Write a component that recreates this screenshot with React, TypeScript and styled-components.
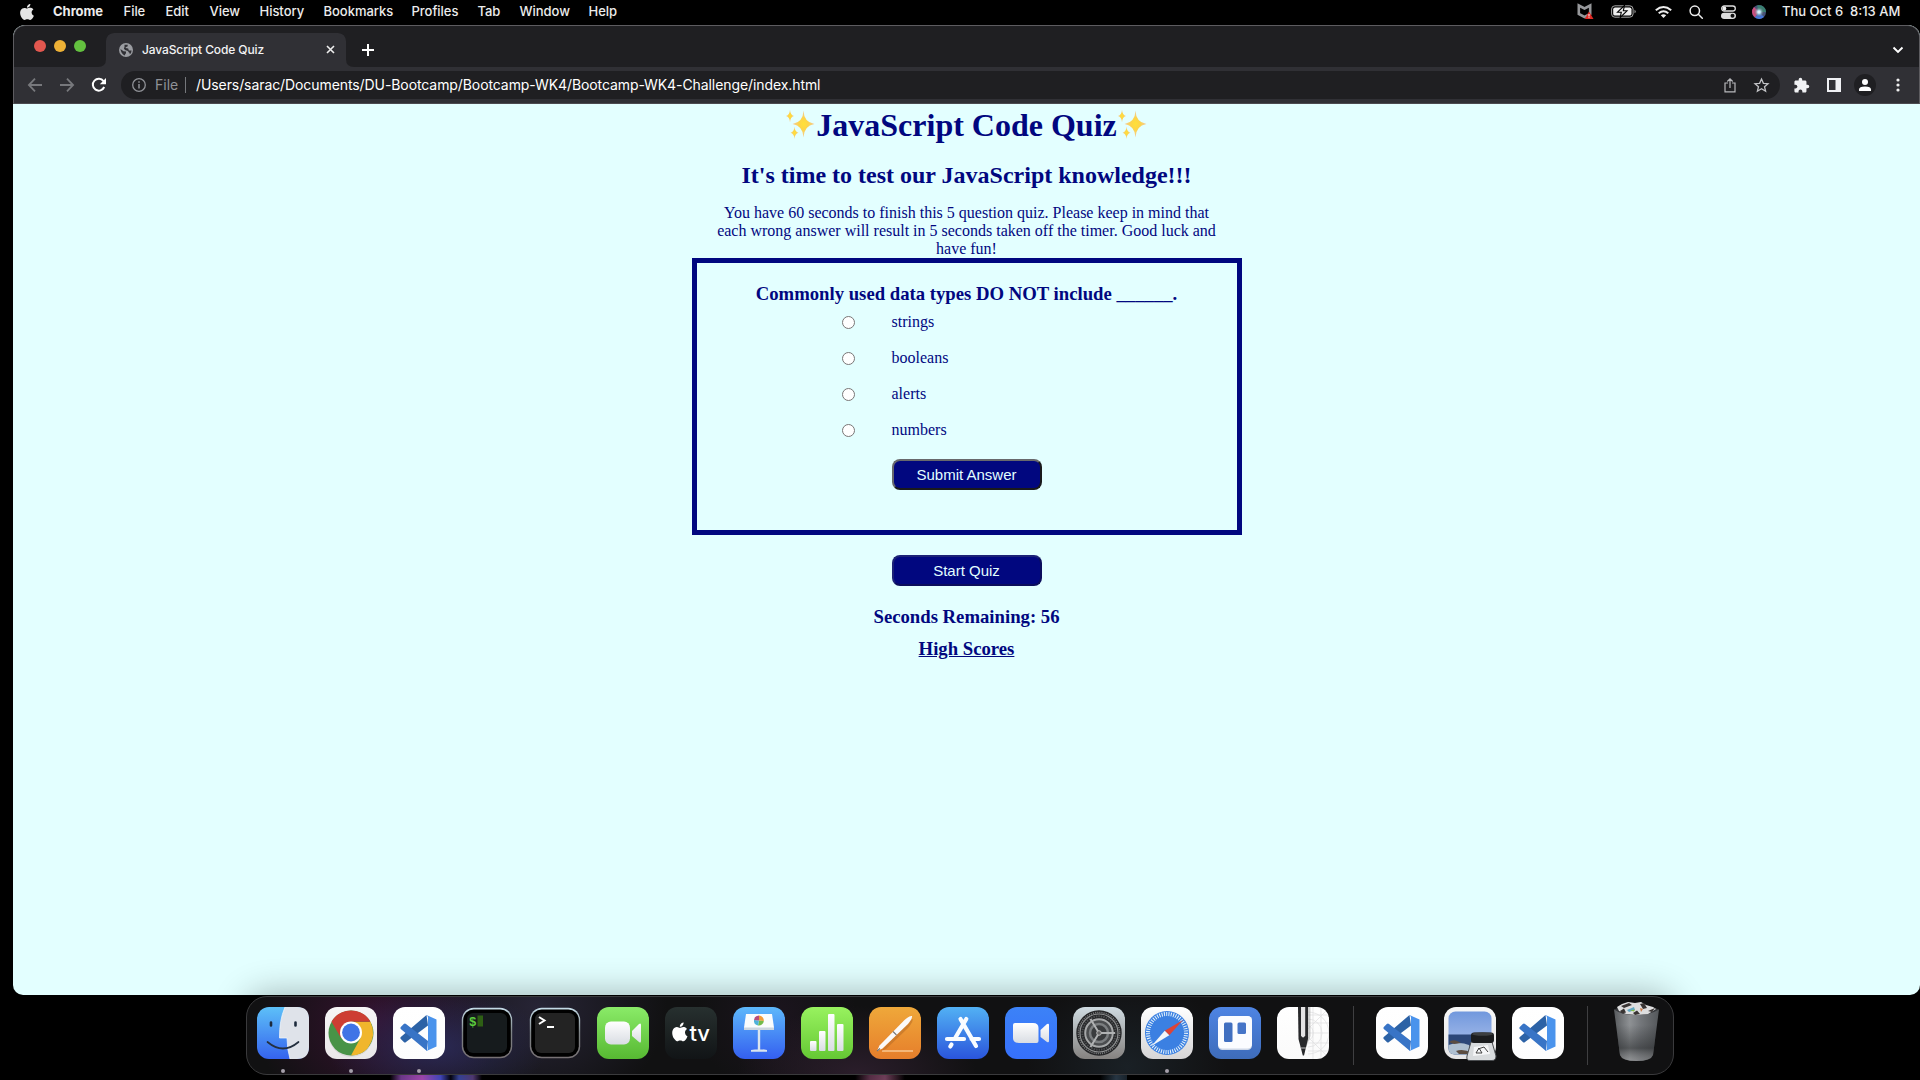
import React from 'react';
import styled, { createGlobalStyle } from 'styled-components';

const NAVY = '#01077f';
const SERIF = '"Liberation Serif", "Times New Roman", serif';
const UI = 'Inter, "Liberation Sans", sans-serif';

const Global = createGlobalStyle`
  * { box-sizing: border-box; }
  html, body { margin: 0; background: #000; }
  svg { display: block; flex: none; overflow: visible; }
`;

const Desktop = styled.div`
  width: 1920px;
  height: 1080px;
  overflow: hidden;
  display: flex;
  flex-direction: column;
  font-family: ${UI};
  background:
    linear-gradient(90deg, transparent, #7a3f9a 12%, #b04fc0 35%, #4a4fd0 55%, #050510 66%, #3c4aa8 75%, #5a4080 90%, transparent) 390px 1075px / 92px 5px no-repeat,
    linear-gradient(90deg, transparent, #62344f 30%, #7d4664 60%, transparent) 855px 1075px / 50px 5px no-repeat,
    linear-gradient(90deg, transparent, #2c3d4c 60%, #1c2730) 1100px 1075px / 27px 5px no-repeat,
    #000;
`;

/* Menu bar */
const MenuBar = styled.header`
  height: 25px;
  display: flex;
  align-items: center;
  padding: 0 19px 3px 20px;
  color: #ececec;
  font-size: 13px;
  line-height: 22px;
`;
const MenuItem = styled.span<{ $w: number; $bold?: boolean; $ls?: number }>`
  width: ${p => p.$w}px;
  flex: none;
  white-space: pre;
  font-weight: ${p => (p.$bold ? 700 : 500)};
  letter-spacing: ${p => p.$ls ?? -0.03}px;
`;
const MenuIcon = styled.span<{ $w: number }>`
  width: ${p => p.$w}px;
  flex: none;
  display: flex;
  padding-top: 1px;
`;
const Spacer = styled.div`
  flex: 1;
`;

/* Browser window */
const Win = styled.section`
  margin-left: 13px;
  height: 970px;
  border-radius: 12px 12px 10px 10px;
  overflow: hidden;
  display: flex;
  flex-direction: column;
  background: #e3ffff;
`;
const Chrome = styled.div`
  height: 79px;
  border: 1px solid #5d5c60;
  border-bottom-color: #4b4a4f;
  border-radius: 12px 12px 0 0;
  background: #1f1f22;
  overflow: hidden;
`;
const TabStrip = styled.div`
  height: 41px;
  display: flex;
  align-items: flex-end;
  padding: 0 15px 0 20px;
`;
const Lights = styled.div`
  display: flex;
  gap: 8px;
  width: 72px;
  height: 34px;
  padding-top: 7px;
`;
const Light = styled.i<{ $c: string }>`
  width: 12px;
  height: 12px;
  border-radius: 50%;
  background: ${p => p.$c};
`;
const Tab = styled.div`
  width: 240px;
  height: 34px;
  border-radius: 8px 8px 0 0;
  background: #303035;
  display: flex;
  align-items: center;
  padding: 0 11px 1px 13px;
  color: #f3f3f4;
  font-size: 12px;
  box-shadow: 8px 8px 0 0 #303035, -8px 8px 0 0 #303035;
  clip-path: path('M-8 34 Q0 34 0 26 V8 Q0 0 8 0 H232 Q240 0 240 8 V26 Q240 34 248 34 Z');
`;
const TabTitle = styled.span`
  flex: 1;
  margin-left: 9px;
  white-space: nowrap;
  letter-spacing: -0.11px;
  font-weight: 500;
`;
const NewTab = styled.div`
  flex: 1;
  height: 34px;
  padding: 11px 0 0 16px;
`;
const Chevron = styled.div`
  height: 34px;
  padding-top: 13px;
`;
const Toolbar = styled.div`
  height: 36px;
  background: #303035;
  display: flex;
  align-items: center;
`;
const Nav = styled.div`
  width: 107px;
  padding-left: 14px;
  display: flex;
  gap: 18px;
`;
const Omnibox = styled.div`
  width: 1659px;
  height: 28px;
  border-radius: 14px;
  background: #1f1f22;
  display: flex;
  align-items: center;
  padding: 0 11px 0 11px;
  font-size: 14px;
`;
const FileLabel = styled.span`
  margin: -1px 0 0 9px;
  width: 30px;
  color: #909297;
`;
const Divider = styled.i`
  width: 1px;
  height: 16px;
  background: #75777b;
`;
const Url = styled.span`
  flex: 1;
  margin: -1px 0 0 10px;
  color: #fff;
  white-space: nowrap;
  letter-spacing: -0.085px;
`;
const OmniActions = styled.div`
  display: flex;
  align-items: center;
  gap: 18px;
`;
const Extensions = styled.div`
  display: flex;
  align-items: center;
  padding-left: 13px;
`;
const Avatar = styled.div`
  width: 22px;
  height: 22px;
  margin: 0 20px 0 12px;
  border-radius: 50%;
  background: #1f1f22;
  display: grid;
  place-items: center;
`;

/* Quiz page */
const Page = styled.main`
  flex: 1;
  display: flex;
  flex-direction: column;
  align-items: center;
  padding-top: 1px;
  font-family: ${SERIF};
  color: ${NAVY};
  text-align: center;
`;
const Title = styled.h1`
  margin: 0;
  display: flex;
  font-size: 32px;
  line-height: 40px;
  white-space: nowrap;
`;
const Subtitle = styled.h2`
  margin: 16px 0 0;
  font-size: 24px;
  line-height: 28px;
`;
const Intro = styled.p`
  margin: 15px 0 0;
  width: 506px;
  font-size: 16px;
  line-height: 18px;
`;
const QuizBox = styled.section`
  width: 550px;
  height: 277px;
  border: 5px solid ${NAVY};
  padding-top: 20px;
  display: flex;
  flex-direction: column;
  align-items: center;
`;
const Heading = styled.h3<{ $top?: number; $link?: boolean }>`
  margin: ${p => p.$top ?? 0}px 0 0;
  font-size: 18.72px;
  line-height: 22px;
  text-decoration: ${p => (p.$link ? 'underline' : 'none')};
`;
const Options = styled.div`
  width: 100%;
  padding-left: 145px;
  margin-top: -1px;
`;
const Option = styled.label`
  height: 36px;
  display: flex;
  align-items: center;
  gap: 37px;
  font-size: 16px;
`;
const Radio = styled.input`
  width: 13px;
  height: 13px;
  margin: 1px 0 0;
`;
const QuizButton = styled.button<{ $top: number; $light: string; $dark: string }>`
  width: 150px;
  height: 31px;
  flex: none;
  margin-top: ${p => p.$top}px;
  padding: 0;
  border: 2px solid;
  border-color: ${p => p.$light} ${p => p.$dark} ${p => p.$dark} ${p => p.$light};
  border-radius: 8px;
  background: ${NAVY};
  color: #e3ffff;
  font: 15px "Liberation Sans", Arial, sans-serif;
`;

/* Dock */
const Dock = styled.footer`
  width: 1428px;
  height: 79px;
  margin: 1px 0 0 246px;
  border: 1px solid #3a3a3c;
  border-radius: 21px;
  display: flex;
  padding: 10px 10px 0;
  gap: 16px;
  background:
    radial-gradient(110px 60px at 190px 50px, rgba(42, 42, 86, .95), transparent),
    radial-gradient(120px 110px at 130px 25px, rgba(62, 18, 54, .8), transparent),
    radial-gradient(130px 110px at 290px 10px, rgba(48, 44, 68, .7), transparent),
    radial-gradient(120px 70px at 610px 79px, rgba(52, 34, 52, .75), transparent),
    radial-gradient(80px 80px at 530px 20px, rgba(38, 24, 42, .5), transparent),
    radial-gradient(100px 90px at 880px 70px, rgba(28, 36, 42, .8), transparent),
    #111112;
  box-shadow: 0 -2px 34px rgba(0, 0, 0, .3);
`;
const Slot = styled.div<{ $run?: boolean }>`
  width: 52px;
  display: flex;
  flex-direction: column;
  gap: 10px;
  &::after {
    content: '';
    display: ${p => (p.$run ? 'block' : 'none')};
    width: 4px;
    height: 4px;
    border-radius: 50%;
    margin-left: 24px;
    background: #a6a0ab;
  }
`;
const DockDivider = styled.i<{ $l: number; $r: number }>`
  width: 1px;
  height: 59px;
  margin: -1px ${p => p.$r}px 0 ${p => p.$l}px;
  background: #3f3f41;
`;

const APPLE = 'M12.15 6.9c-.95 0-2.42-1.08-3.96-1.04-2.04.03-3.91 1.18-4.96 3.01-2.12 3.68-.55 9.1 1.52 12.1 1.01 1.45 2.21 3.09 3.79 3.04 1.52-.07 2.09-.99 3.94-.99 1.83 0 2.35.99 3.96.95 1.64-.03 2.68-1.48 3.68-2.95 1.16-1.69 1.64-3.33 1.66-3.42-.04-.01-3.18-1.22-3.22-4.86-.03-3.04 2.48-4.49 2.6-4.56-1.43-2.09-3.62-2.32-4.4-2.38-2-.16-3.67 1.09-4.61 1.09zM15.53 3.83c.84-1.01 1.4-2.43 1.25-3.83-1.21.05-2.66.8-3.53 1.82-.78.9-1.45 2.34-1.27 3.71 1.34.1 2.71-.69 3.55-1.7';

const Sparkles = () => (
  <svg width="31.5" height="36" viewBox="0 0 31.5 36">
    <defs>
      <radialGradient id="spark"><stop offset="0" stopColor="#ffe138" /><stop offset=".4" stopColor="#fdd548" /><stop offset="1" stopColor="#f1c9a0" /></radialGradient>
    </defs>
    <g fill="url(#spark)">
      <path d="M18.500 5.500 Q18.900 17.200 29.500 19 Q18.900 20.800 18.500 32.500 Q18.100 20.800 7.500 19 Q18.100 17.200 18.500 5.500Z" />
      <path d="M5 4.500 Q5.400 10.200 9 11 Q5.400 11.800 5 17.500 Q4.600 11.800 1 11 Q4.600 10.200 5 4.500Z" />
      <path d="M9.500 21.500 Q9.900 27 13.500 27.700 Q9.900 28.400 9.500 34 Q9.100 28.400 5.500 27.700 Q9.100 27 9.500 21.500Z" />
    </g>
  </svg>
);

const Tile = ({ id, from, to, children }: { id: string; from: string; to: string; children?: React.ReactNode }) => (
  <svg width="52" height="52" viewBox="0 0 52 52">
    <defs>
      <linearGradient id={id} x1="0" y1="0" x2="0" y2="1"><stop stopColor={from} /><stop offset="1" stopColor={to} /></linearGradient>
      <linearGradient id="silver" x1="0" y1="0" x2="0" y2="1"><stop stopColor="#fff" /><stop offset="1" stopColor="#d9dde3" /></linearGradient>
    </defs>
    <rect width="52" height="52" rx="12" fill={`url(#${id})`} />
    {children}
  </svg>
);

const Finder = () => (
  <Tile id="finder" from="#5dc0f8" to="#3563ee">
    <path d="M28 0H40Q52 0 52 12V40Q52 52 40 52H33Q30 42 30 31H22.500Q22 14 28 0Z" fill="#dfe3ea" />
    <path d="M28 0Q22 14 22.500 31H30Q30 42 33 52" fill="none" stroke="#f5f8fb" strokeWidth=".7" />
    <path d="M14 15.500v3M38.500 15.500v3" stroke="#1c2a3c" strokeWidth="2.600" strokeLinecap="round" />
    <path d="M10.500 35Q26 48 41.500 35" fill="none" stroke="#24303f" strokeWidth="1.700" strokeLinecap="round" />
  </Tile>
);
const ChromeApp = () => (
  <Tile id="chromeapp" from="#f7f5f6" to="#e9e7e9">
    <circle cx="26" cy="27.500" r="22.500" fill="#bbb" opacity=".35" />
    <circle cx="26" cy="26" r="22.500" fill="#489347" />
    <path d="M26 15H45.500Q52 28 43 40.700Q37 48.300 26 48.500L35.500 31Z" fill="#f0b62c" />
    <path d="M6.510 14.750A22.500 22.500 0 0 1 45.500 14.750H26L16 31Z" fill="#cd3e33" />
    <circle cx="26" cy="25.500" r="11" fill="#fff" />
    <circle cx="26" cy="25.500" r="8.900" fill="#3f74e6" />
  </Tile>
);
const Code = ({ n }: { n: number }) => (
  <Tile id={`code${n}`} from="#fff" to="#fdfdfd">
    <path d="M33.500 8L35 18.500L13 35Q12 36 10.800 35L7.800 32Q6.900 31 7.800 30Z" fill="#2c62a6" />
    <path d="M34 44L35 34L13 17Q12 16 10.800 17L7.800 20Q6.900 21 7.800 22Z" fill="#3874c6" />
    <path d="M33.500 8L43.500 12.500V39.500L33.500 44Q35 43 35 41V11Q35 9 33.500 8Z" fill="#4a93ec" />
  </Tile>
);
const Term = ({ id, face, children }: { id: string; face: string; children: React.ReactNode }) => (
  <svg width="52" height="52" viewBox="0 0 52 52">
    <defs><linearGradient id={id} x1="0" y1="0" x2="0" y2="1"><stop stopColor="#c5dce8" /><stop offset=".5" stopColor="#7d8285" /><stop offset="1" stopColor="#777174" /></linearGradient></defs>
    <rect x=".8" y=".8" width="50.400" height="50.400" rx="12" fill={`url(#${id})`} />
    <rect x="2.200" y="2.500" width="47.600" height="47.300" rx="10.500" fill="#000" />
    <rect x="6" y="6" width="40" height="40" rx="6" fill={face} />
    {children}
  </svg>
);
const PromptText = styled.text`
  font: 700 12.5px "Liberation Mono", monospace;
`;
const FaceTime = () => (
  <Tile id="facetime" from="#8aeb68" to="#57b932">
    <rect x="8" y="14.500" width="25" height="23" rx="6" fill="url(#silver)" />
    <path d="M35 24L42 17Q44 15.500 44 18V34Q44 36.500 42 35L35 29Z" fill="url(#silver)" />
  </Tile>
);
const TvText = styled.text`
  font: 500 22px ${UI};
  letter-spacing: -0.3px;
`;
const AppleTv = () => (
  <Tile id="tv" from="#27302f" to="#111416">
    <path d={APPLE} fill="#fff" transform="translate(5.500 15.500) scale(.78)" />
    <TvText x="24.500" y="34" fill="#fff">tv</TvText>
  </Tile>
);
const Keynote = () => (
  <Tile id="keynote" from="#5db8fb" to="#345ff0">
    <path d="M24.800 22h2.400v21h-2.400zM18 43q8-1.500 16 0v1.800H18z" fill="#dbe5ee" />
    <path d="M13 7H39L41 20.500V23H11V20.500Z" fill="#fafcfd" />
    <path d="M11 20.500H41V23H11Z" fill="#ccd5df" />
    <path d="M26 13.500V8.500A5 5 0 0 1 30.800 14Z" fill="#f19b38" />
    <path d="M26 13.500L30.800 14A5 5 0 0 1 25 18.500Z" fill="#73bb4b" />
    <path d="M26 13.500L25 18.500A5 5 0 0 1 21 13Z" fill="#4db1da" />
    <path d="M26 13.500L21 13A5 5 0 0 1 26 8.500Z" fill="#b84b7c" />
  </Tile>
);
const Numbers = () => (
  <Tile id="numbers" from="#98f25f" to="#65c834">
    <g fill="url(#silver)">
      <rect x="9" y="34" width="6.500" height="10" rx="1" /><rect x="18" y="24" width="6.500" height="20" rx="1" />
      <rect x="27" y="7" width="6.500" height="37" rx="1" /><rect x="36" y="17" width="6.500" height="27" rx="1" />
    </g>
  </Tile>
);
const Pages = () => (
  <Tile id="pages" from="#efa83a" to="#e67e2b">
    <path d="M13 44H44" stroke="#fac791" strokeWidth="1.500" />
    <path d="M11 43L40 12L43 11Q42 16 37 21L16 41Z" fill="#b46824" opacity=".5" transform="translate(1 1)" />
    <path d="M8 44L10.500 38.500L35.500 13Q40.500 8.500 43 9Q43.500 11.500 39 17L13.500 41.500Z" fill="#fbfaf9" />
    <path d="M24 24.500l3.500 3.500M8 44l3-2.500" stroke="#777" strokeWidth="1.100" />
  </Tile>
);
const AppStore = () => (
  <Tile id="store" from="#52b1f4" to="#2a55dc">
    <g stroke="#f9fcff" strokeWidth="4.200" strokeLinecap="round" fill="none">
      <path d="M29.300 12L18.500 30.500M23.500 12L39 39M10 32H27M34.500 32H42M14.500 37.500L13.300 39.500" />
    </g>
  </Tile>
);
const Zoom = () => (
  <Tile id="zoom" from="#3c82f7" to="#3670fb">
    <path d="M8 18Q8 16 10 16H28Q33.500 16 33.500 21V34Q33.500 36 31.500 36H14Q8 36 8 31Z" fill="url(#silver)" />
    <path d="M35.500 23L42 17Q44 16 44 18V34Q44 36 42 35L35.500 30Z" fill="url(#silver)" />
  </Tile>
);
const Settings = () => (
  <Tile id="settings" from="#cfdbe1" to="#858280">
    <circle cx="26" cy="26" r="22.700" fill="#242527" />
    <circle cx="26" cy="26" r="20.600" fill="none" stroke="#77797a" strokeWidth="1.500" strokeDasharray="1.150 1" />
    <circle cx="26" cy="26" r="19" fill="none" stroke="#8f9192" strokeWidth="1.200" />
    <circle cx="26" cy="26" r="16.700" fill="none" stroke="#4b4d4f" strokeWidth="2" strokeDasharray="1.500 1" />
    <circle cx="26" cy="26" r="13.800" fill="#4b4d4f" stroke="#a5a7a8" strokeWidth="2" />
    <circle cx="26" cy="26" r="9" fill="#3a3c3e" stroke="#7b7e80" strokeWidth="2.500" />
    <path d="M26 26H42M26 26L17.500 12M26 26L17.500 40" stroke="#b0b2b3" strokeWidth="2" />
    <circle cx="26" cy="26" r="2.300" fill="#666" stroke="#bbb" />
  </Tile>
);
const Safari = () => (
  <Tile id="safari" from="#ffffff" to="#d6d5d6">
    <circle cx="26" cy="26" r="22" fill="#3b80e2" />
    <circle cx="26" cy="26" r="19" fill="none" stroke="#e6f3fb" strokeWidth="4" strokeDasharray="1 1.320" />
    <path d="M42 13L28.300 28.300L23.700 23.700Z" fill="#dd4437" />
    <path d="M10.500 39L23.700 23.700L28.300 28.300Z" fill="#f3f6f8" />
  </Tile>
);
const Trello = () => (
  <Tile id="trello" from="#4e84e3" to="#3e6cba">
    <rect x="9" y="9" width="34" height="34" rx="4.500" fill="#cfd8e8" />
    <rect x="9" y="9" width="34" height="32.500" rx="4.500" fill="#fbfcff" />
    <rect x="15" y="15.500" width="8.500" height="19.500" rx="1.500" fill="#416fc0" /><rect x="28.500" y="15.500" width="8.500" height="11.500" rx="1.500" fill="#4675c8" />
  </Tile>
);
const Pencil = () => (
  <Tile id="pencil" from="#fff" to="#fafafa">
    <defs><clipPath id="sheet"><rect width="52" height="52" rx="12" /></clipPath></defs>
    <g fill="none" stroke="#dedee0" strokeWidth=".7" clipPath="url(#sheet)">
      <path d="M31 18.500a8 8 0 0 1 0 15M31 5a21 21 0 0 1 0 42M31 12a14 14 0 0 1 0 28M36 0V52M44 0V52M31 8H52M31 16H52M31 26H52M31 36H52M31 44H52M31 22L52 1M31 30L52 51" />
    </g>
    <path d="M31 0h2.500v29l-5 13z" fill="#999" opacity=".45" />
    <path d="M21 0H31V32L27 48.500H25.800L21.500 32Z" fill="#28292b" />
    <path d="M24 0H28.200V28.500Q26 32.500 24 28.500Z" fill="#e4e3e4" />
    <path d="M24 41H28.800" stroke="#eee" strokeWidth=".8" />
  </Tile>
);
const Preview = () => (
  <Tile id="preview" from="#f8f8f8" to="#e5e5e6">
    <defs><linearGradient id="sky" x1="0" y1="0" x2="0" y2="1"><stop stopColor="#7198dd" /><stop offset="1" stopColor="#b4c6ed" /></linearGradient></defs>
    <rect x="4.500" y="4.500" width="43" height="43" rx="7" fill="url(#sky)" />
    <path d="M4.500 27.500H47.500V42Q47.500 47.500 42 47.500H11Q4.500 47.500 4.500 41Z" fill="#2c4778" />
    <path d="M4.500 38Q15 34 25 38L28 47.500H11Q4.500 47.500 4.500 41Z" fill="#aebfd0" />
    <path d="M5 35q4-3 8-1l4 2-7 1zM12 44q7-3 16 2l-3 1H15z" fill="#5b4c40" />
    <path d="M27 35H48L52 49Q52 53.500 48 53.500H26Q22 53.500 23 49Z" fill="#d8dbdd" stroke="#4a4d50" strokeWidth="1" />
    <path d="M30 40L44 38L46 47L29 49Z" fill="#f5f6f7" />
    <path d="M32 46l3-5 3 5zm8-6l4 5M34 42l6-2" stroke="#444" fill="none" strokeWidth="1" />
    <rect x="27" y="25.500" width="23" height="10.500" rx="3" fill="#1b1c1e" /><ellipse cx="38.500" cy="27" rx="10.500" ry="1.800" fill="#3d3f41" />
  </Tile>
);
const Trash = () => (
  <svg width="52" height="52" viewBox="0 0 52 52">
    <defs><linearGradient id="bin"><stop stopColor="#585b5e" /><stop offset=".35" stopColor="#8e9194" /><stop offset=".6" stopColor="#73767a" /><stop offset="1" stopColor="#54575a" /></linearGradient>
      <linearGradient id="binshade" x1="0" y1="0" x2="0" y2="1"><stop offset=".3" stopColor="#26282a" stopOpacity="0" /><stop offset=".75" stopColor="#26282a" stopOpacity=".55" /><stop offset="1" stopColor="#999" stopOpacity=".3" /></linearGradient></defs>
    <path d="M4 2.500Q26 6 49 2.500L43 48Q41 54 26.500 54T10 48Z" fill="url(#bin)" />
    <path d="M4 2.500Q26 6 49 2.500L43 48Q41 54 26.500 54T10 48Z" fill="url(#binshade)" />
    <path d="M4 2.500Q10-1 26-1T49 2.500Q40 8 26 8T4 2.500Z" fill="#35373a" />
    <path d="M7 0L12-3L18-5L25-4L31-5L36-2L43 0L46 2L38 7L27 8L16 7L9 4Z" fill="#dededf" />
    <path d="M11-1L19-4L22-2L14 1ZM10 4L14 1.500L16 5.500L12 6.500ZM30-3L34-4L37 1L33 2ZM38 4L45 1L42 5ZM23 6L27 3.500L30 7L25 8Z" fill="#393433" />
    <path d="M17 3l7-3 1 3-6 2z" fill="#62a8c4" /><path d="M20 3.500l5-1-1 2z" fill="#85bc46" /><path d="M30 1l3 1-2 3z" fill="#c97a48" />
  </svg>
);

const menus: [string, number][] = [['File', 42], ['Edit', 44], ['View', 50], ['History', 64], ['Bookmarks', 88], ['Profiles', 66], ['Tab', 42], ['Window', 69], ['Help', 40]];

export default function App() {
  return (
    <Desktop>
      <Global />
      <MenuBar>
        <MenuIcon $w={33}><svg width="14" height="16" viewBox="2 0 20 24" preserveAspectRatio="none"><path d={APPLE} fill="#e4e4e4" /></svg></MenuIcon>
        <MenuItem $w={70.5} $bold>Chrome</MenuItem>
        {menus.map(([label, w]) => <MenuItem key={label} $w={w}>{label}</MenuItem>)}
        <Spacer />
        <MenuIcon $w={34}>
          <svg width="17" height="17" viewBox="0 0 17 17"><path d="M1.800 2.500L7.500 5.500L13.200 2.500V11L7.500 14L1.800 11Z" fill="none" stroke="#96979a" strokeWidth="2.600" /><path d="M5 .5L7.500 3.500L10 .5Z" fill="#000" /><path d="M12 8.500L16.500 16H7.800Z" fill="#df2b25" /><path d="M12 11v2.500M12 14.300v.8" stroke="#fff" strokeWidth="1" /></svg>
        </MenuIcon>
        <MenuIcon $w={44}>
          <svg width="25" height="13" viewBox="0 0 25 13"><rect x=".6" y=".8" width="21.500" height="11.400" rx="3.300" fill="none" stroke="#a5a5a5" /><rect x="2.200" y="2.400" width="18.300" height="8.200" rx="1.900" fill="#efefef" /><path d="M23.500 4.700v3.600q1.200-.4 1.200-1.800t-1.200-1.800" fill="#999" /><path d="M13.500 .5L6.500 7.200H10.300L9.200 12.500L16 5.800H12.300Z" fill="#efefef" stroke="#000" strokeWidth="1.100" /></svg>
        </MenuIcon>
        <MenuIcon $w={34}>
          <svg width="17" height="12" viewBox="0 0 17 12" fill="none" stroke="#ededed" strokeWidth="2"><path d="M.8 4.200Q8.500-2.200 16.200 4.200M3.700 7.200Q8.500 3.400 13.300 7.200" /><path d="M8.500 12L5.800 9.300Q8.500 7.200 11.200 9.300Z" fill="#ededed" stroke="none" /></svg>
        </MenuIcon>
        <MenuIcon $w={32}>
          <svg width="14" height="14" viewBox="0 0 14 14" fill="none" stroke="#ededed" strokeWidth="1.500"><circle cx="5.800" cy="5.800" r="4.700" /><path d="M9.300 9.300L13.300 13.300" strokeLinecap="round" /></svg>
        </MenuIcon>
        <MenuIcon $w={31}>
          <svg width="15" height="14" viewBox="0 0 15 14"><rect x=".7" y="1" width="13.600" height="5" rx="2.500" fill="none" stroke="#ddd" strokeWidth="1.300" /><circle cx="3.400" cy="3.500" r="1.900" fill="#eee" /><rect x="0" y="7.700" width="15" height="6.300" rx="3.150" fill="#ddd" /><circle cx="11.500" cy="10.850" r="2" fill="#111" /></svg>
        </MenuIcon>
        <MenuIcon $w={30.5}>
          <svg width="14" height="14" viewBox="0 0 14 14"><defs><radialGradient id="siri"><stop stopColor="#fff" /><stop offset=".3" stopColor="#bde5f5" stopOpacity=".9" /><stop offset="1" stopColor="#444" stopOpacity="0" /></radialGradient></defs><circle cx="7" cy="7" r="7" fill="#465277" /><path d="M7 7L2 2A7 7 0 0 0 3 12.500Z" fill="#d24d80" /><path d="M7 7L3 12.500A7 7 0 0 0 12 12Z" fill="#4677dc" /><path d="M7 7L5 .5A7 7 0 0 1 14 7Z" fill="#388171" /><circle cx="7" cy="7" r="5.500" fill="url(#siri)" /></svg>
        </MenuIcon>
        <MenuItem $w={119} $ls={0}>{'Thu Oct 6  8:13 AM'}</MenuItem>
      </MenuBar>

      <Win>
        <Chrome>
          <TabStrip>
            <Lights><Light $c="#e2574f" /><Light $c="#eeb136" /><Light $c="#63c03f" /></Lights>
            <Tab>
              <svg width="14" height="14" viewBox="0 0 14 14"><circle cx="7" cy="7" r="7" fill="#9a9ca1" /><path d="M1.500 6L4.500 8.200L7 8.500V10.200Q6 11 5.800 12.400Q2 11 1.500 6ZM5.500 1.800L8.800 1.700L8.500 3.500Q6.500 3.500 6.500 5L9.200 5.500L9.800 7.500L12.600 7.500Q12.500 10 10.800 11.300L10.500 9.800Q9.500 9.500 9 8L6 7Q4 5.500 5.500 4Z" fill="#303035" /></svg>
              <TabTitle>JavaScript Code Quiz</TabTitle>
              <svg width="9" height="9" viewBox="0 0 9 9"><path d="M1 1L8 8M8 1L1 8" stroke="#eee" strokeWidth="1.600" /></svg>
            </Tab>
            <NewTab><svg width="12" height="12" viewBox="0 0 12 12"><path d="M6 0V12M0 6H12" stroke="#fff" strokeWidth="2" /></svg></NewTab>
            <Chevron><svg width="12" height="8" viewBox="0 0 12 8"><path d="M1.500 1.500L6 6L10.500 1.500" fill="none" stroke="#fff" strokeWidth="1.900" /></svg></Chevron>
          </TabStrip>
          <Toolbar>
            <Nav>
              <svg width="14" height="14" viewBox="0 0 14 14"><path d="M14 7H1M7 .7L.9 7L7 13.300" fill="none" stroke="#77787c" strokeWidth="1.800" /></svg>
              <svg width="14" height="14" viewBox="0 0 14 14"><path d="M0 7H13M7 .7L13.100 7L7 13.300" fill="none" stroke="#77787c" strokeWidth="1.800" /></svg>
              <svg width="14" height="14" viewBox="0 0 14 14"><path d="M12.200 9A5.900 5.900 0 1 1 11.500 3.200" fill="none" stroke="#fff" strokeWidth="2" /><path d="M14 0V6.200H7.800Z" fill="#fff" /></svg>
            </Nav>
            <Omnibox>
              <svg width="14" height="14" viewBox="0 0 14 14"><circle cx="7" cy="7" r="6.300" fill="none" stroke="#909297" strokeWidth="1.300" /><path d="M7 6V10.500M7 3.300V4.800" stroke="#909297" strokeWidth="1.500" /></svg>
              <FileLabel>File</FileLabel>
              <Divider />
              <Url>/Users/sarac/Documents/DU-Bootcamp/Bootcamp-WK4/Bootcamp-WK4-Challenge/index.html</Url>
              <OmniActions>
                <svg width="12" height="15" viewBox="0 0 12 15" fill="none" stroke="#b7b8bb" strokeWidth="1.200"><path d="M4 5H1V13.800H11V5H8M6 10V1M3.300 3.500L6 .9L8.700 3.500" /></svg>
                <svg width="15" height="14" viewBox="0 0 15 14"><path d="M7.500 1L9.400 5.300L14 5.700L10.500 8.700L11.600 13.200L7.500 10.800L3.400 13.200L4.500 8.700L1 5.700L5.600 5.300Z" fill="none" stroke="#c2c3c6" strokeWidth="1.300" /></svg>
              </OmniActions>
            </Omnibox>
            <Extensions>
              <svg width="17" height="17" viewBox="0 0 24 24"><path fill="#f0f1f4" d="M20.500 11H19V7c0-1.100-.9-2-2-2h-4V3.500a2.500 2.500 0 0 0-5 0V5H4c-1.100 0-1.990.9-1.990 2v3.800H3.500c1.490 0 2.700 1.210 2.700 2.700s-1.210 2.700-2.700 2.700H2V20c0 1.100.9 2 2 2h3.800v-1.500c0-1.490 1.210-2.700 2.700-2.700s2.700 1.210 2.700 2.700V22H17c1.100 0 2-.9 2-2v-4h1.500a2.500 2.500 0 0 0 0-5z" /></svg>
              <svg width="32" height="14" viewBox="-17 0 32 14"><path d="M0 0H14V14H0ZM2 2V12H8.500V2Z" fillRule="evenodd" fill="#f0f1f4" /></svg>
              <Avatar><svg width="12" height="12" viewBox="0 0 12 12" fill="#fff"><circle cx="6" cy="3" r="3" /><path d="M0 12V10.500Q0 7.500 6 7.500T12 10.500V12Z" /></svg></Avatar>
              <svg width="4" height="14" viewBox="0 0 4 14" fill="#eee"><circle cx="2" cy="2" r="1.600" /><circle cx="2" cy="7" r="1.600" /><circle cx="2" cy="12" r="1.600" /></svg>
            </Extensions>
          </Toolbar>
        </Chrome>

        <Page>
          <Title><Sparkles />JavaScript Code Quiz<Sparkles /></Title>
          <Subtitle>It's time to test our JavaScript knowledge!!!</Subtitle>
          <Intro>You have 60 seconds to finish this 5 question quiz. Please keep in mind that each wrong answer will result in 5 seconds taken off the timer. Good luck and have fun!</Intro>
          <QuizBox>
            <Heading>Commonly used data types DO NOT include ______.</Heading>
            <Options>
              {['strings', 'booleans', 'alerts', 'numbers'].map(o => (
                <Option key={o}><Radio type="radio" name="answer" />{o}</Option>
              ))}
            </Options>
            <QuizButton $top={11} $light="#68686c" $dark="#1a1a1c">Submit Answer</QuizButton>
          </QuizBox>
          <QuizButton $top={20} $light="#1c2277" $dark="#0b0d5c">Start Quiz</QuizButton>
          <Heading $top={20}>Seconds Remaining: 56</Heading>
          <Heading $top={10} $link>High Scores</Heading>
        </Page>
      </Win>

      <Dock>
        <Slot $run><Finder /></Slot>
        <Slot $run><ChromeApp /></Slot>
        <Slot $run><Code n={1} /></Slot>
        <Slot><Term id="iterm" face="#161b1d"><rect x="16.500" y="8.500" width="5.500" height="11" fill="#2e6014" /><PromptText x="8" y="18.500" fill="#5ccc3d">$</PromptText></Term></Slot>
        <Slot><Term id="term" face="#232323"><path d="M10 10L15.500 13.500L10 17M18 20H25" fill="none" stroke="#fff" strokeWidth="2" /></Term></Slot>
        <Slot><FaceTime /></Slot>
        <Slot><AppleTv /></Slot>
        <Slot><Keynote /></Slot>
        <Slot><Numbers /></Slot>
        <Slot><Pages /></Slot>
        <Slot><AppStore /></Slot>
        <Slot><Zoom /></Slot>
        <Slot><Settings /></Slot>
        <Slot $run><Safari /></Slot>
        <Slot><Trello /></Slot>
        <Slot><Pencil /></Slot>
        <DockDivider $l={8} $r={6} />
        <Slot><Code n={2} /></Slot>
        <Slot><Preview /></Slot>
        <Slot><Code n={3} /></Slot>
        <DockDivider $l={7} $r={6} />
        <Slot><Trash /></Slot>
      </Dock>
    </Desktop>
  );
}
